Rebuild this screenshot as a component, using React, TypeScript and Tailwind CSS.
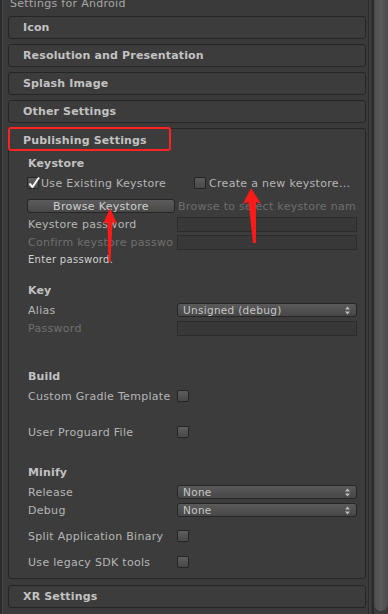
import React from 'react';

const Checkbox = ({ checked = false }: { checked?: boolean }) => (
  <div className="relative w-[12px] h-[12px] shrink-0 rounded-[2px] border border-[#242424] bg-linear-to-b from-[#5e5e5e] to-[#484848]">
    {checked && (
      <svg className="absolute -left-[1px] -top-[2px]" width="14" height="14" viewBox="0 0 14 14">
        <path d="M2.5 7.5 L5.5 11 L12 1.5" fill="none" stroke="#f2f2f2" strokeWidth="2.2" strokeLinejoin="round" />
      </svg>
    )}
  </div>
);

const Dropdown = ({ value }: { value: string }) => (
  <div className="w-[180px] h-[14px] rounded-[3px] border border-[#262626] bg-linear-to-b from-[#5a5a5a] to-[#474747] flex items-center justify-between pl-[5px] pr-[6px] text-[10.5px] text-[#c6c6c6]">
    <span>{value}</span>
    <svg width="5" height="9" viewBox="0 0 5 9">
      <path d="M0 3.5 L2.5 0.5 L5 3.5 Z M0 5.5 L2.5 8.5 L5 5.5 Z" fill="#bdbdbd" />
    </svg>
  </div>
);

const Field = () => <div className="w-[180px] h-[15px] border border-[#2c2c2c] bg-[#383838]" />;

const Foldout = ({ title, className = '' }: { title: string; className?: string }) => (
  <div className={`h-[23px] mt-[5px] rounded-[3px] border border-[#262626] bg-[#3c3c3c] flex items-center pl-[14px] font-bold tracking-[0.15px] text-[#c2c2c2] ${className}`}>
    {title}
  </div>
);

function Row({ label, dim = false, className = '', children }: { label: string; dim?: boolean; className?: string; children?: React.ReactNode }) {
  return (
    <div className={`h-[18px] flex items-center ${className}`}>
      <div className={`w-[145px] mr-[4px] whitespace-nowrap overflow-hidden ${dim ? 'text-[#707070]' : 'text-[#b6b6b6]'}`}>{label}</div>
      {children}
    </div>
  );
}

const Heading = ({ title, className = '' }: { title: string; className?: string }) => (
  <div className={`h-[16px] flex items-center font-bold tracking-[0.15px] text-[#c2c2c2] ${className}`}>{title}</div>
);

export default function App() {
  return (
    <div className="relative w-[388px] h-[614px] overflow-hidden flex bg-[#3a3a3a] font-['DejaVu_Sans',sans-serif] text-[11px] leading-none tracking-[0.3px]">
      <div className="w-[2px] bg-[#2a2a2a]" />
      <div className="w-[1px] bg-[#474747]" />

      <div className="w-[363px] flex flex-col pl-[5px]">
        <div className="h-[16px] -mt-[5px] ml-[2px] flex items-center text-[#a8a8a8]">Settings for Android</div>
        <Foldout title="Icon" />
        <Foldout title="Resolution and Presentation" />
        <Foldout title="Splash Image" />
        <Foldout title="Other Settings" />

        <section className="relative h-[451px] mt-[5px] rounded-[3px] border border-[#262626] bg-[#3c3c3c] flex flex-col">
          <div className="absolute -left-[1px] -top-[2px] w-[163px] h-[24px] rounded-[3px] border-2 border-[#ff2222]" />
          <div className="h-[22px] flex items-center pl-[14px] font-bold tracking-[0.15px] text-[#c2c2c2]">Publishing Settings</div>

          <div className="flex flex-col pl-[19px] pt-[4px]">
            <Heading title="Keystore" />
            <div className="h-[16px] mt-[4px] flex items-center -ml-[1px]">
              <div className="w-[167px] flex items-center gap-[2px] text-[#b6b6b6]">
                <Checkbox checked />
                <span>Use Existing Keystore</span>
              </div>
              <div className="flex items-center gap-[3px] text-[#b6b6b6]">
                <Checkbox />
                <span>Create a new keystore...</span>
              </div>
            </div>
            <div className="h-[16px] mt-[7px] flex items-center -ml-[1px]">
              <div className="w-[148px] h-[14px] rounded-[3px] border border-[#262626] bg-linear-to-b from-[#5c5c5c] to-[#484848] flex items-center justify-center text-[#cfcfcf]">
                Browse Keystore
              </div>
              <div className="ml-[3px] w-[178px] whitespace-nowrap overflow-hidden text-[#6e6e6e]">Browse to select keystore name</div>
            </div>
            <Row label="Keystore password" className="mt-[1px]">
              <Field />
            </Row>
            <Row label="Confirm keystore password" dim>
              <Field />
            </Row>
            <div className="h-[18px] flex items-center text-[10px] text-[#d0d0d0]">Enter password.</div>

            <Heading title="Key" className="mt-[13px]" />
            <Row label="Alias" className="mt-[3px]">
              <Dropdown value="Unsigned (debug)" />
            </Row>
            <Row label="Password" dim>
              <Field />
            </Row>

            <Heading title="Build" className="mt-[31px]" />
            <Row label="Custom Gradle Template" className="mt-[3px]">
              <Checkbox />
            </Row>
            <Row label="User Proguard File" className="mt-[18px]">
              <Checkbox />
            </Row>

            <Heading title="Minify" className="mt-[23px]" />
            <Row label="Release" className="mt-[3px]">
              <Dropdown value="None" />
            </Row>
            <Row label="Debug">
              <Dropdown value="None" />
            </Row>
            <Row label="Split Application Binary" className="mt-[8px]">
              <Checkbox />
            </Row>
            <Row label="Use legacy SDK tools" className="mt-[8px]">
              <Checkbox />
            </Row>
          </div>
        </section>

        <Foldout title="XR Settings" className="mt-[6px]" />
      </div>

      <div className="w-[2px]" />
      <div className="w-[1px] bg-[#2b2b2b]" />
      <div className="w-[2px] bg-[#3e3e3e]" />
      <div className="w-[1px] bg-[#333333]" />
      <div className="w-[2px] bg-[#2a2a2a]" />
      <div className="w-[14px] h-[611px] rounded-b-[7px] bg-linear-to-r from-[#4c4c4c] via-[#5a5a5a] to-[#4a4a4a]" />

      <svg className="absolute left-0 top-0 pointer-events-none" width="388" height="614" viewBox="0 0 388 614">
        <path d="M110 208 L117 224 L112.5 222 L110.5 262 L108.5 262 L107.5 222 L103 224 Z" fill="#ff1a1a" />
        <path d="M251 188 L261 204 L256 202 L256 243 L253 243 L248.5 202 L243 204 Z" fill="#ff1a1a" />
      </svg>
    </div>
  );
}
